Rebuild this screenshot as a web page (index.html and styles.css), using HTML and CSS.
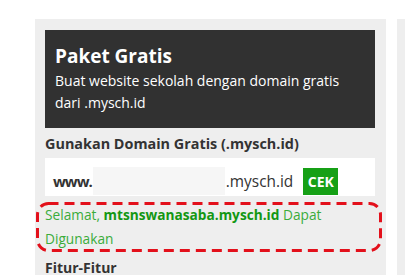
FILE: index.html
```html
<!DOCTYPE html>
<html lang="id">
<head>
<meta charset="utf-8">
<title>Paket Gratis</title>
<link rel="stylesheet" href="styles.css">
</head>
<body>
<div class="wrap">
  <section class="panel">
    <div class="hero">
      <h2 class="hero-title">Paket Gratis</h2>
      <p class="hero-text">Buat website sekolah dengan domain gratis dari .mysch.id</p>
    </div>
    <h3 class="label">Gunakan Domain Gratis (.mysch.id)</h3>
    <div class="domain-row">
      <span class="www">www.</span>
      <input class="domain-input" type="text" value="">
      <span class="suffix">.mysch.id</span>
      <button class="cek" type="button">CEK</button>
    </div>
    <div class="message">
      <p class="message-text">Selamat, <strong class="message-domain">mtsnswanasaba.mysch.id</strong> Dapat Digunakan</p>
      <svg class="highlight" width="346" height="50" viewBox="0 0 346 50" aria-hidden="true">
        <rect x="1.5" y="1.5" width="343" height="47" rx="11" ry="11" fill="none" stroke="#e3101b" stroke-width="3" stroke-dasharray="10 6"/>
      </svg>
    </div>
    <h3 class="features">Fitur-Fitur</h3>
  </section>
  <section class="panel panel-next"></section>
</div>
</body>
</html>
```
FILE: styles.css
```css
html, body {
  margin: 0;
  padding: 0;
  background: #ffffff;
  overflow: hidden;
}
body {
  font-family: "Open Sans", "Liberation Sans", sans-serif;
  color: #333333;
}
.wrap {
  display: flex;
  gap: 11px;
  padding: 19px 0 0 35px;
  width: 800px;
}
.panel {
  width: 351px;
  height: 300px;
  flex: none;
  box-sizing: border-box;
  background: #eeeeee;
  padding: 11px 11px 0 10px;
}
.hero {
  background: #313131;
  color: #ffffff;
  padding: 12px 10px 14px;
}
.hero-title {
  margin: 0;
  font-size: 19px;
  line-height: 28px;
  font-weight: 700;
}
.hero-text {
  margin: 0;
  font-size: 14px;
  line-height: 22px;
}
.label {
  margin: 5px 0 3px;
  font-size: 14.4px;
  line-height: 22px;
  font-weight: 700;
  color: #333333;
}
.domain-row {
  display: flex;
  align-items: center;
  background: #ffffff;
  padding: 9px 8px 1px;
  height: 38px;
  box-sizing: border-box;
}
.www {
  font-size: 15px;
  font-weight: 700;
  color: #333333;
  letter-spacing: -1px;
  white-space: nowrap;
  margin-right: 1px;
}
.domain-input {
  width: 132px;
  height: 28px;
  box-sizing: border-box;
  border: none;
  background: #f6f6f6;
  padding: 0;
  margin: 0;
  outline: none;
}
.suffix {
  font-size: 15.4px;
  color: #333333;
  margin-left: 1px;
}
.cek {
  margin-left: 10px;
  height: 27px;
  width: 35px;
  padding: 0;
  border: none;
  background: #16a016;
  color: #ffffff;
  font-family: "Open Sans", "Liberation Sans", sans-serif;
  font-size: 14px;
  font-weight: 700;
}
.message {
  position: relative;
  margin-top: 5px;
}
.message-text {
  margin: 0;
  padding: 2px 30px 0 0;
  font-size: 13.7px;
  line-height: 24px;
  color: #3aac3a;
}
.message-domain {
  color: #139713;
  font-weight: 700;
}
.highlight {
  position: absolute;
  top: 1px;
  left: -9px;
}
.features {
  margin: 6px 0 0;
  font-size: 14px;
  line-height: 22px;
  font-weight: 700;
  color: #333333;
}
```
